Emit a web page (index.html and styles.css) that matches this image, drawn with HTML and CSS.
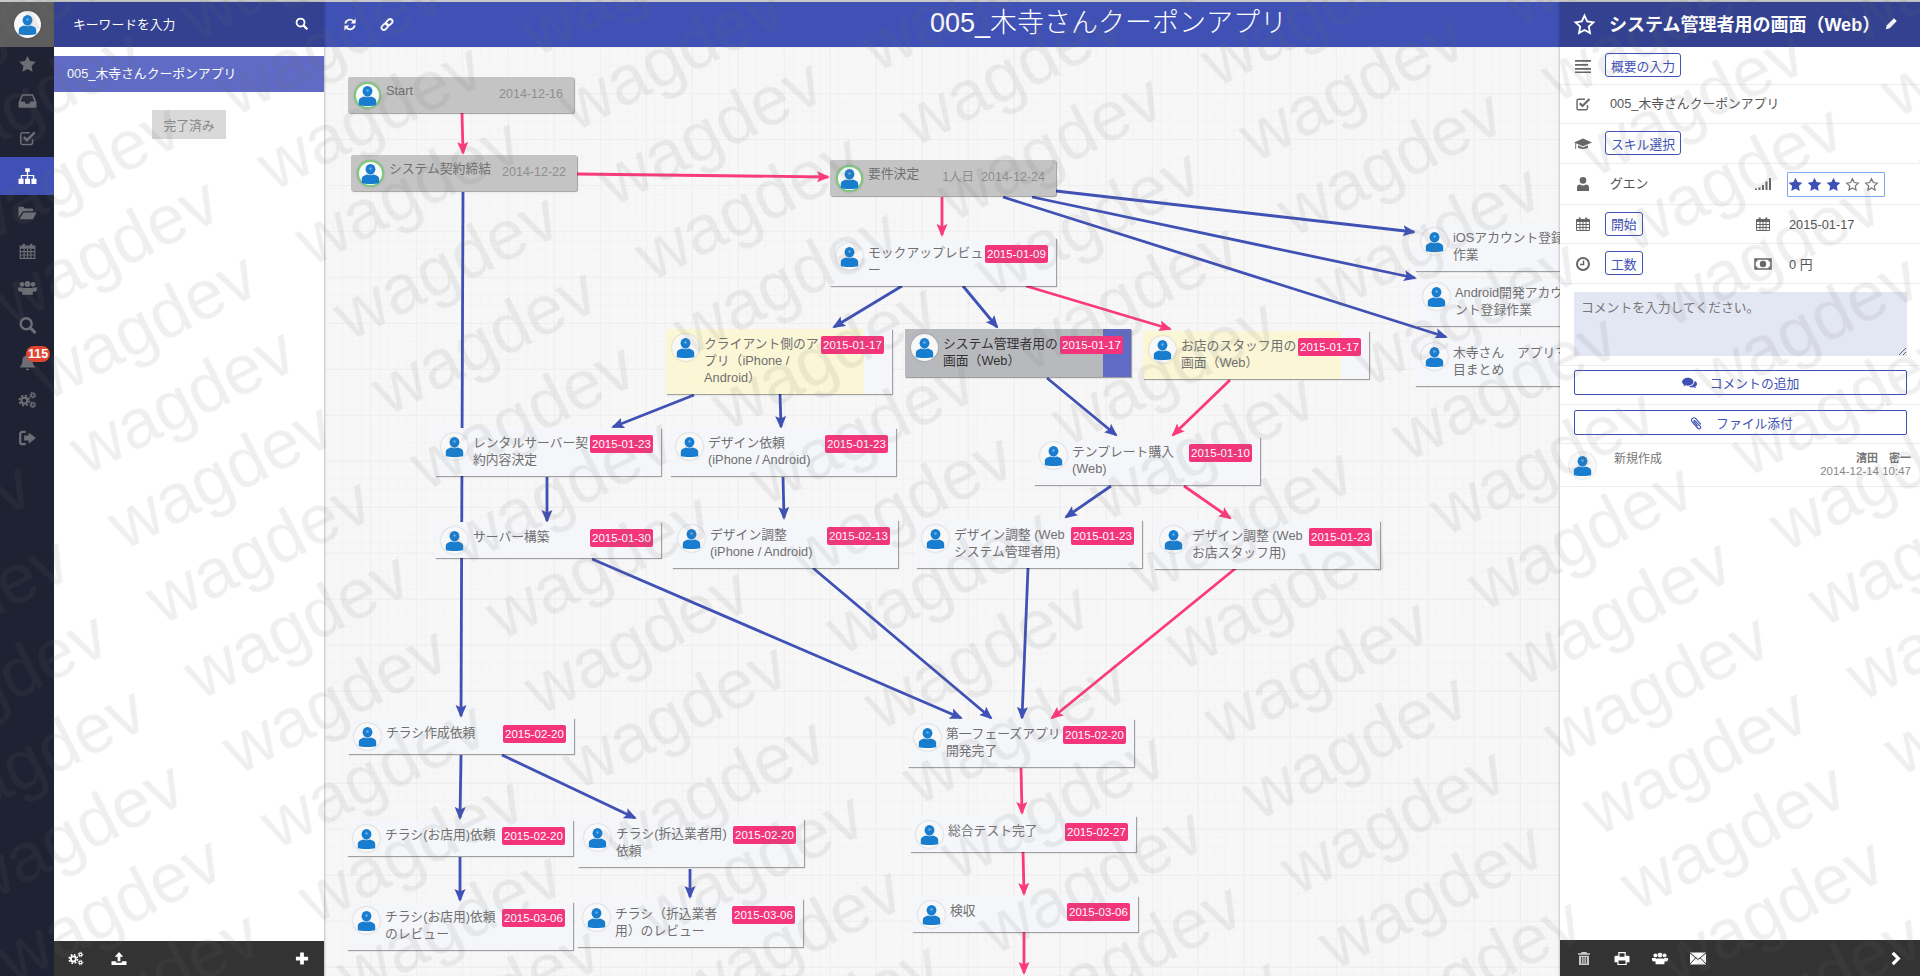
FILE: index.html
```html
<!DOCTYPE html>
<html lang="ja">
<head>
  <meta charset="UTF-8">
  <title>005_木寺さんクーポンアプリ</title>
  <link rel="stylesheet" href="styles.css">
</head>
<body>
  <!-- Icon sprite -->
  <svg class="sprite" xmlns="http://www.w3.org/2000/svg">
    <symbol id="i-star" viewBox="0 0 16 16"><polygon fill="currentColor" points="8,.8 10.2,5.4 15.3,6.1 11.6,9.7 12.5,14.8 8,12.4 3.5,14.8 4.4,9.7 .7,6.1 5.8,5.4"/></symbol>
    <symbol id="i-star-o" viewBox="0 0 16 16"><polygon fill="none" stroke="currentColor" stroke-width="1.3" points="8,1.8 9.9,5.9 14.2,6.5 11,9.5 11.8,13.9 8,11.8 4.2,13.9 5,9.5 1.8,6.5 6.1,5.9"/></symbol>
    <symbol id="i-inbox" viewBox="0 0 16 16"><path fill="currentColor" fill-rule="evenodd" d="M3 2h10l3 7v4a1 1 0 0 1-1 1H1a1 1 0 0 1-1-1V9zM3.9 3.4 2 8.4h3.4l1 2h3.2l1-2H14l-1.9-5z"/></symbol>
    <symbol id="i-check" viewBox="0 0 16 16"><path fill="none" stroke="currentColor" stroke-width="1.4" d="M12.5 9v3.2a1.5 1.5 0 0 1-1.5 1.5H3.5A1.5 1.5 0 0 1 2 12.2V4.8a1.5 1.5 0 0 1 1.500-1.500H10"/><path fill="none" stroke="currentColor" stroke-width="2.2" d="M4.800 7.200 7.500 10 14.500 3"/></symbol>
    <symbol id="i-sitemap" viewBox="0 0 16 16"><path fill="currentColor" d="M6 1h4v3.500H8.600V7H14v3.500h-1.200V8.100H8.600v2.400H7.400V8.100H3.200v2.400H2V7h5.400V4.500H6zM0 10.500h4.500V15H0zM5.800 10.500h4.400V15H5.800zM11.500 10.500H16V15h-4.500z"/></symbol>
    <symbol id="i-folder" viewBox="0 0 16 16"><path fill="currentColor" d="M0 3.500a1 1 0 0 1 1-1h3.500l1.200 1.500H12a1 1 0 0 1 1 1V6.500H4L0 12zM4.400 7.500H16l-3.300 6H.9z"/></symbol>
    <symbol id="i-calendar" viewBox="0 0 16 16"><path fill="none" stroke="currentColor" d="M1.500 3.500h13v11h-13zM1.500 8.500h13M1.500 11.500h13M5 6v8.500M8 6v8.500M11 6v8.500"/><path fill="currentColor" d="M1.500 3.500h13V6h-13zM3.700 1.500h2V4h-2zM10.300 1.500h2V4h-2z"/></symbol>
    <symbol id="i-group" viewBox="0 0 18 16"><g fill="currentColor"><circle cx="3.800" cy="4.500" r="2.200"/><circle cx="14.200" cy="4.500" r="2.200"/><circle cx="9" cy="4.200" r="2.800"/><path d="M0 7.500h4.300l1 4H1.500L0 10zM13.700 7.500H18V10l-1.500 1.500h-3.800zM5 8h8l1 3v3.500H4V11z"/></g></symbol>
    <symbol id="i-search" viewBox="0 0 16 16"><circle cx="6.800" cy="6.800" r="4.900" fill="none" stroke="currentColor" stroke-width="2.2"/><path stroke="currentColor" stroke-width="2.8" stroke-linecap="round" d="M10.800 10.800 14.300 14.300"/></symbol>
    <symbol id="i-bell" viewBox="0 0 16 16"><path fill="currentColor" d="M8 1C5 1 3.500 3 3.500 6c0 3-1.500 4.500-2.500 6h14c-1-1.500-2.500-3-2.500-6 0-3-1.500-5-4.500-5zM6.500 13h3a1.500 1.500 0 0 1-3 0z"/></symbol>
    <symbol id="i-cogs" viewBox="0 0 18 16"><g fill="none" stroke="currentColor"><circle cx="6" cy="8.500" r="2.800" stroke-width="2"/><circle cx="6" cy="8.500" r="4.700" stroke-width="1.8" stroke-dasharray="2 1.700"/><circle cx="14" cy="3.500" r="1.500" stroke-width="1.2"/><circle cx="14" cy="3.500" r="2.600" stroke-width="1.1" stroke-dasharray="1.2 .8"/><circle cx="14" cy="12.500" r="1.500" stroke-width="1.2"/><circle cx="14" cy="12.500" r="2.600" stroke-width="1.1" stroke-dasharray="1.2 .8"/></g></symbol>
    <symbol id="i-signout" viewBox="0 0 16 16"><path fill="none" stroke="currentColor" stroke-width="2" d="M6.500 2.500H3.500a2 2 0 0 0-2 2v7a2 2 0 0 0 2 2h3"/><polygon fill="currentColor" points="9,3 15.500,8 9,13 9,10.200 5,10.200 5,5.800 9,5.800"/></symbol>
    <symbol id="i-refresh" viewBox="0 0 16 16"><g fill="none" stroke="currentColor" stroke-width="2"><path d="M3 7a5 5 0 0 1 8.700-2.400"/><path d="M13 9a5 5 0 0 1-8.700 2.400"/></g><polygon fill="currentColor" points="14,1.500 14,7 8.800,7"/><polygon fill="currentColor" points="2,14.500 2,9 7.200,9"/></symbol>
    <symbol id="i-link" viewBox="0 0 16 16"><g fill="none" stroke="currentColor" stroke-width="2" transform="rotate(-45 8 8)"><rect x="0.800" y="5.500" width="7.800" height="5" rx="2.500"/><rect x="7.400" y="5.500" width="7.800" height="5" rx="2.500"/></g></symbol>
    <symbol id="i-pencil" viewBox="0 0 16 16"><path fill="currentColor" d="M11 1.500 14.500 5l-8.700 8.700-4.800 1.300 1.300-4.800z"/></symbol>
    <symbol id="i-lines" viewBox="0 0 16 16"><path fill="currentColor" d="M0 2h16v1.700H0zM0 6h13v1.700H0zM0 10h16v1.700H0zM0 13.500h16v1.500H0z"/></symbol>
    <symbol id="i-cap" viewBox="0 0 20 16"><path fill="currentColor" d="M10 2 0 6.200 10 10.500l10-4.300zM4.500 9.500v2.800c2 1.700 9 1.700 11 0V9.500L10 12zM1.400 7.200h1v6.300h-1z"/></symbol>
    <symbol id="i-user" viewBox="0 0 16 16"><circle cx="8" cy="4.400" r="3.300" fill="currentColor"/><path fill="currentColor" d="M2 15v-3.500C2 9.300 3.500 8.500 5 8.500c1 .7 2 1 3 1s2-.3 3-1c1.500 0 3 .8 3 3V15z"/></symbol>
    <symbol id="i-signal" viewBox="0 0 16 16"><path fill="currentColor" d="M0 12.500h2V14H0zM3.500 11.500h2V14h-2zM7 9h2v5H7zM10.500 5.500h2V14h-2zM14 2h2v12h-2z"/></symbol>
    <symbol id="i-clock" viewBox="0 0 16 16"><circle cx="8" cy="8" r="6" fill="none" stroke="currentColor" stroke-width="2"/><path fill="none" stroke="currentColor" stroke-width="1.5" d="M8.500 4.500V8.500H5"/></symbol>
    <symbol id="i-money" viewBox="0 0 18 14"><rect x="1" y="2" width="16" height="10" fill="none" stroke="currentColor" stroke-width="1.5"/><circle cx="9" cy="7" r="3.200" fill="currentColor"/><path fill="currentColor" d="M1.500 2.500h3l-3 3zM16.500 2.500h-3l3 3zM1.500 11.500h3l-3-3zM16.500 11.500h-3l3-3z"/></symbol>
    <symbol id="i-comments" viewBox="0 0 18 16"><path fill="currentColor" d="M6.500 2C3 2 0 4 0 6.500c0 1.400.9 2.600 2.200 3.400L1.300 12l2.700-1.300c.8.200 1.600.3 2.500.3 3.600 0 6.500-2 6.500-4.500S10.100 2 6.500 2z"/><path fill="currentColor" d="M14 6.500c0 2.900-2.800 5-6.300 5.400.9.700 2.200 1.100 3.800 1.100.6 0 1.200-.1 1.800-.2l2.400 1.300-.7-2.100c1.200-.7 2-1.800 2-3 0-1.600-1.100-2.900-2.900-3.600.2.400.9.700.9 1.100z"/></symbol>
    <symbol id="i-clip" viewBox="0 0 16 16"><path fill="none" stroke="currentColor" stroke-width="1.3" d="M13.500 9.500 8 3.200C6.800 1.900 5 1.800 3.800 2.900s-1.200 2.900 0 4.200l6.300 6.900c.8.900 2 .9 2.700.2s.7-1.800-.1-2.600L7 5.600c-.4-.4-.9-.5-1.300-.1s-.3.900.1 1.300l4.300 4.800"/></symbol>
    <symbol id="i-upload" viewBox="0 0 16 16"><path fill="currentColor" d="M8 1 12.500 6H9.500v5h-3V6H3.500zM0 11h5v1.500h6V11h5v4H0z"/></symbol>
    <symbol id="i-plus" viewBox="0 0 16 16"><path fill="currentColor" d="M6 1.500h4v4.500h4.500v4H10v4.500H6V10H1.500V6H6z"/></symbol>
    <symbol id="i-trash" viewBox="0 0 16 16"><path fill="currentColor" d="M5.500 1h5l.8 1.500h3V4H1.700V2.500h3zM2.700 5h10.600v10H2.700zM5 6.500v7h1v-7zM7.500 6.500v7h1v-7zM10 6.500v7h1v-7z" fill-rule="evenodd"/></symbol>
    <symbol id="i-print" viewBox="0 0 16 16"><path fill="currentColor" fill-rule="evenodd" d="M4 1h8v4h2.500A1.500 1.500 0 0 1 16 6.500V12h-3v3H3v-3H0V6.500A1.500 1.500 0 0 1 1.500 5H4zM5.300 2.300V6h5.400V2.300zM4.300 10v3.800h7.400V10z"/></symbol>
    <symbol id="i-mail" viewBox="0 0 16 12"><rect width="16" height="12" fill="currentColor"/><path fill="none" stroke="#333" d="M0 .5 8 7l8-6.500M0 11.500l5.800-6.200M16 11.500l-5.800-6.200"/></symbol>
    <symbol id="i-chevron" viewBox="0 0 16 16"><path fill="none" stroke="currentColor" stroke-width="3.4" d="M4.500 2 10.500 8l-6 6"/></symbol>
    <symbol id="i-person" viewBox="0 0 27 27"><ellipse cx="13.500" cy="9.300" rx="4.900" ry="5.400" fill="#187dcf"/><path fill="#187dcf" d="M4.800 23v-4.200c0-2.700 3-3.300 5.200-4.300 2 1.100 5 1.100 7 0 2.200 1 5.200 1.600 5.200 4.300V23c-3 1.300-14.400 1.300-17.400 0z"/><circle cx="13.500" cy="8.500" r="1.200" fill="#6db2ea"/></symbol>
  </svg>

  <div class="app">
    <!-- Icon rail -->
    <nav class="rail">
      <div class="rail-top"><span class="avatar"><svg><use href="#i-person"/></svg></span></div>
      <a class="rail-item"><svg class="ico"><use href="#i-star"/></svg></a>
      <a class="rail-item"><svg class="ico"><use href="#i-inbox"/></svg></a>
      <a class="rail-item"><svg class="ico"><use href="#i-check"/></svg></a>
      <a class="rail-item active"><svg class="ico"><use href="#i-sitemap"/></svg></a>
      <a class="rail-item"><svg class="ico"><use href="#i-folder"/></svg></a>
      <a class="rail-item"><svg class="ico"><use href="#i-calendar"/></svg></a>
      <a class="rail-item"><svg class="ico"><use href="#i-group"/></svg></a>
      <a class="rail-item"><svg class="ico"><use href="#i-search"/></svg></a>
      <a class="rail-item"><svg class="ico"><use href="#i-bell"/></svg><span class="count">115</span></a>
      <a class="rail-item"><svg class="ico"><use href="#i-cogs"/></svg></a>
      <a class="rail-item"><svg class="ico"><use href="#i-signout"/></svg></a>
    </nav>

    <!-- Project list -->
    <aside class="projects">
      <div class="projects-head">
        <span>キーワードを入力</span>
        <svg class="ico-sm"><use href="#i-search"/></svg>
      </div>
      <div class="project-item">005_木寺さんクーポンアプリ</div>
      <button class="done-btn">完了済み</button>
      <div class="bar-foot">
        <svg class="ico-sm"><use href="#i-cogs"/></svg>
        <svg class="ico-sm upload"><use href="#i-upload"/></svg>
        <svg class="ico-sm add"><use href="#i-plus"/></svg>
      </div>
    </aside>

    <!-- Diagram -->
    <main class="board">
      <header class="board-head">
        <svg class="ico-sm"><use href="#i-refresh"/></svg>
        <svg class="ico-sm"><use href="#i-link"/></svg>
        <h1>005_木寺さんクーポンアプリ</h1>
      </header>
      <div class="canvas">
        <svg class="edges" viewBox="324 47 1236 929">
          <defs>
            <marker id="head-blue" markerUnits="userSpaceOnUse" markerWidth="14" markerHeight="12" refX="11" refY="6" orient="auto"><path d="M0 .5 13 6 0 11.500 2.500 6z" fill="#3f51b5"/></marker>
            <marker id="head-pink" markerUnits="userSpaceOnUse" markerWidth="14" markerHeight="12" refX="11" refY="6" orient="auto"><path d="M0 .5 13 6 0 11.500 2.500 6z" fill="#fb3a7c"/></marker>
          </defs>
          <g class="edge-pink">
            <line x1="462" y1="113" x2="463" y2="153"/>
            <line x1="577" y1="174" x2="828" y2="177"/>
            <line x1="942" y1="197" x2="942" y2="235"/>
            <line x1="1026" y1="286" x2="1170" y2="329"/>
            <line x1="1230" y1="380" x2="1173" y2="435"/>
            <line x1="1184" y1="486" x2="1230" y2="518"/>
            <line x1="1236" y1="568" x2="1052" y2="718"/>
            <line x1="1021" y1="768" x2="1022" y2="813"/>
            <line x1="1023" y1="851" x2="1024" y2="894"/>
            <line x1="1024" y1="932" x2="1024" y2="973"/>
          </g>
          <g class="edge-blue">
            <line x1="463" y1="192" x2="461" y2="716"/>
            <line x1="1056" y1="191" x2="1414" y2="232"/>
            <line x1="1032" y1="197" x2="1415" y2="278"/>
            <line x1="1003" y1="197" x2="1446" y2="337"/>
            <line x1="902" y1="286" x2="834" y2="327"/>
            <line x1="963" y1="286" x2="997" y2="327"/>
            <line x1="1047" y1="378" x2="1116" y2="435"/>
            <line x1="694" y1="395" x2="613" y2="427"/>
            <line x1="780" y1="394" x2="781" y2="427"/>
            <line x1="547" y1="477" x2="547" y2="521"/>
            <line x1="783" y1="477" x2="784" y2="518"/>
            <line x1="1111" y1="486" x2="1066" y2="517"/>
            <line x1="592" y1="559" x2="961" y2="718"/>
            <line x1="813" y1="568" x2="991" y2="718"/>
            <line x1="1028" y1="568" x2="1022" y2="718"/>
            <line x1="461" y1="755" x2="460" y2="818"/>
            <line x1="502" y1="755" x2="635" y2="818"/>
            <line x1="460" y1="857" x2="460" y2="900"/>
            <line x1="690" y1="869" x2="690" y2="897"/>
          </g>
        </svg>

        <div class="node done" style="left:24px;top:30px">
          <span class="avatar"><svg><use href="#i-person"/></svg></span>
          <div class="node-title">Start</div>
          <span class="node-date">2014-12-16</span>
        </div>
        <div class="node done" style="left:27px;top:108px">
          <span class="avatar"><svg><use href="#i-person"/></svg></span>
          <div class="node-title">システム契約締結</div>
          <span class="node-date">2014-12-22</span>
        </div>
        <div class="node done" style="left:506px;top:113px">
          <span class="avatar"><svg><use href="#i-person"/></svg></span>
          <div class="node-title">要件決定</div>
          <span class="node-date">1人日&nbsp;&nbsp;2014-12-24</span>
        </div>
        <div class="node" style="left:506px;top:191px">
          <span class="avatar"><svg><use href="#i-person"/></svg></span>
          <div class="node-title">モックアップレビュ<br>ー</div>
          <span class="badge">2015-01-09</span>
        </div>
        <div class="node warn" style="left:342px;top:282px">
          <span class="avatar"><svg><use href="#i-person"/></svg></span>
          <div class="node-title">クライアント側のア<br>プリ（iPhone /<br>Android）</div>
          <span class="badge">2015-01-17</span>
        </div>
        <div class="node selected" style="left:581px;top:282px">
          <span class="avatar"><svg><use href="#i-person"/></svg></span>
          <div class="node-title">システム管理者用の<br>画面（Web）</div>
          <span class="badge">2015-01-17</span>
        </div>
        <div class="node warn" style="left:819px;top:284px">
          <span class="avatar"><svg><use href="#i-person"/></svg></span>
          <div class="node-title">お店のスタッフ用の<br>画面（Web）</div>
          <span class="badge">2015-01-17</span>
        </div>
        <div class="node" style="left:710px;top:390px">
          <span class="avatar"><svg><use href="#i-person"/></svg></span>
          <div class="node-title">テンプレート購入<br>(Web)</div>
          <span class="badge">2015-01-10</span>
        </div>
        <div class="node" style="left:111px;top:381px">
          <span class="avatar"><svg><use href="#i-person"/></svg></span>
          <div class="node-title">レンタルサーバー契<br>約内容決定</div>
          <span class="badge">2015-01-23</span>
        </div>
        <div class="node" style="left:346px;top:381px">
          <span class="avatar"><svg><use href="#i-person"/></svg></span>
          <div class="node-title">デザイン依頼<br>(iPhone / Android)</div>
          <span class="badge">2015-01-23</span>
        </div>
        <div class="node" style="left:111px;top:475px">
          <span class="avatar"><svg><use href="#i-person"/></svg></span>
          <div class="node-title">サーバー構築</div>
          <span class="badge">2015-01-30</span>
        </div>
        <div class="node" style="left:348px;top:473px">
          <span class="avatar"><svg><use href="#i-person"/></svg></span>
          <div class="node-title">デザイン調整<br>(iPhone / Android)</div>
          <span class="badge">2015-02-13</span>
        </div>
        <div class="node" style="left:592px;top:473px">
          <span class="avatar"><svg><use href="#i-person"/></svg></span>
          <div class="node-title">デザイン調整 (Web<br>システム管理者用)</div>
          <span class="badge">2015-01-23</span>
        </div>
        <div class="node" style="left:830px;top:474px">
          <span class="avatar"><svg><use href="#i-person"/></svg></span>
          <div class="node-title">デザイン調整 (Web<br>お店スタッフ用)</div>
          <span class="badge">2015-01-23</span>
        </div>
        <div class="node" style="left:1091px;top:176px">
          <span class="avatar"><svg><use href="#i-person"/></svg></span>
          <div class="node-title">iOSアカウント登録<br>作業</div>
        </div>
        <div class="node" style="left:1093px;top:231px">
          <span class="avatar"><svg><use href="#i-person"/></svg></span>
          <div class="node-title">Android開発アカウ<br>ント登録作業</div>
        </div>
        <div class="node" style="left:1091px;top:291px">
          <span class="avatar"><svg><use href="#i-person"/></svg></span>
          <div class="node-title">木寺さん　アプリマ<br>目まとめ</div>
        </div>
        <div class="node" style="left:24px;top:671px">
          <span class="avatar"><svg><use href="#i-person"/></svg></span>
          <div class="node-title">チラシ作成依頼</div>
          <span class="badge">2015-02-20</span>
        </div>
        <div class="node" style="left:23px;top:773px">
          <span class="avatar"><svg><use href="#i-person"/></svg></span>
          <div class="node-title">チラシ(お店用)依頼</div>
          <span class="badge">2015-02-20</span>
        </div>
        <div class="node" style="left:254px;top:772px">
          <span class="avatar"><svg><use href="#i-person"/></svg></span>
          <div class="node-title">チラシ(折込業者用)<br>依頼</div>
          <span class="badge">2015-02-20</span>
        </div>
        <div class="node" style="left:23px;top:855px">
          <span class="avatar"><svg><use href="#i-person"/></svg></span>
          <div class="node-title">チラシ(お店用)依頼<br>のレビュー</div>
          <span class="badge">2015-03-06</span>
        </div>
        <div class="node" style="left:253px;top:852px">
          <span class="avatar"><svg><use href="#i-person"/></svg></span>
          <div class="node-title">チラシ（折込業者<br>用）のレビュー</div>
          <span class="badge">2015-03-06</span>
        </div>
        <div class="node" style="left:584px;top:672px">
          <span class="avatar"><svg><use href="#i-person"/></svg></span>
          <div class="node-title">第一フェーズアプリ<br>開発完了</div>
          <span class="badge">2015-02-20</span>
        </div>
        <div class="node" style="left:586px;top:769px">
          <span class="avatar"><svg><use href="#i-person"/></svg></span>
          <div class="node-title">総合テスト完了</div>
          <span class="badge">2015-02-27</span>
        </div>
        <div class="node" style="left:588px;top:849px">
          <span class="avatar"><svg><use href="#i-person"/></svg></span>
          <div class="node-title">検収</div>
          <span class="badge">2015-03-06</span>
        </div>
      </div>
    </main>

    <!-- Task detail -->
    <aside class="detail">
      <header class="detail-head">
        <svg class="head-star"><use href="#i-star-o"/></svg>
        <h2>システム管理者用の画面（Web）</h2>
        <svg class="ico-xs"><use href="#i-pencil"/></svg>
      </header>
      <div class="row row-38">
        <div class="cell"><svg class="ico-row"><use href="#i-lines"/></svg><button class="chip">概要の入力</button></div>
      </div>
      <div class="row row-39">
        <div class="cell wide"><svg class="ico-row"><use href="#i-check"/></svg><span class="val">005_木寺さんクーポンアプリ</span></div>
      </div>
      <div class="row row-40">
        <div class="cell"><svg class="ico-row"><use href="#i-cap"/></svg><button class="chip">スキル選択</button></div>
      </div>
      <div class="row row-41">
        <div class="cell"><svg class="ico-row"><use href="#i-user"/></svg><span class="val">グエン</span></div>
        <div class="cell"><svg class="ico-row"><use href="#i-signal"/></svg>
          <div class="stars">
            <svg class="on"><use href="#i-star"/></svg>
            <svg class="on"><use href="#i-star"/></svg>
            <svg class="on"><use href="#i-star"/></svg>
            <svg><use href="#i-star-o"/></svg>
            <svg><use href="#i-star-o"/></svg>
          </div>
        </div>
      </div>
      <div class="row row-39">
        <div class="cell"><svg class="ico-row"><use href="#i-calendar"/></svg><button class="chip">開始</button></div>
        <div class="cell"><svg class="ico-row"><use href="#i-calendar"/></svg><span class="val near">2015-01-17</span></div>
      </div>
      <div class="row row-40">
        <div class="cell"><svg class="ico-row"><use href="#i-clock"/></svg><button class="chip">工数</button></div>
        <div class="cell"><svg class="ico-row"><use href="#i-money"/></svg><span class="val near">0 円</span></div>
      </div>
      <div class="comment-box">
        <textarea placeholder="コメントを入力してください。"></textarea>
      </div>
      <div class="action first">
        <button class="wide-btn"><svg class="ico-btn"><use href="#i-comments"/></svg>コメントの追加</button>
      </div>
      <div class="action">
        <button class="wide-btn"><svg class="ico-btn"><use href="#i-clip"/></svg>ファイル添付</button>
      </div>
      <div class="history">
        <span class="avatar"><svg><use href="#i-person"/></svg></span>
        <span class="history-text">新規作成</span>
        <div class="history-meta">
          <strong>濱田　密一</strong>
          <span>2014-12-14 10:47</span>
        </div>
      </div>
      <div class="bar-foot detail-foot">
        <svg class="ico-sm soft"><use href="#i-trash"/></svg>
        <svg class="ico-sm"><use href="#i-print"/></svg>
        <svg class="ico-sm"><use href="#i-group"/></svg>
        <svg class="ico-sm"><use href="#i-mail"/></svg>
        <svg class="ico-sm add"><use href="#i-chevron"/></svg>
      </div>
    </aside>
  </div>

  <!-- Watermark over the whole page -->
  <svg class="watermark" width="1920" height="976">
    <defs>
      <pattern id="wm" patternUnits="userSpaceOnUse" width="296" height="84" patternTransform="translate(585 152) rotate(-27)">
        <text x="0" y="62">wagdev</text>
      </pattern>
    </defs>
    <rect width="1920" height="976" fill="url(#wm)"/>
  </svg>
</body>
</html>
```

FILE: styles.css
```css
/* Base */
html, body {
  margin: 0;
  padding: 0;
  height: 976px;
  overflow: hidden;
}
body {
  font-family: "Liberation Sans", "Noto Sans CJK JP", sans-serif;
  font-size: 12.8px;
  color: #666;
  background: #fff;
}
h1, h2 {
  margin: 0;
  font-weight: normal;
}
button {
  font-family: inherit;
}
.sprite {
  display: none;
}

.app {
  display: flex;
  height: 976px;
  box-sizing: border-box;
  border-top: 2px solid #c9c9c9;
}

/* Rail */
.rail {
  width: 54px;
  flex: none;
  background: #1f2233;
  color: #6d6e75;
}
.rail-top {
  height: 45px;
  margin-bottom: -2px;
  background: #5d5d5d;
  display: flex;
  align-items: center;
  justify-content: center;
}
.rail-item {
  height: 37.4px;
  display: flex;
  align-items: center;
  justify-content: center;
  position: relative;
}
.rail-item.active {
  background: #3f51b5;
  color: #fff;
}
.ico {
  width: 19px;
  height: 18px;
}
.count {
  position: absolute;
  left: 26px;
  top: 2px;
  height: 16px;
  line-height: 16px;
  padding: 0 2px;
  border-radius: 8px;
  background: #df4632;
  color: #fff;
  font-size: 12.5px;
  font-weight: bold;
}

/* Avatars */
.avatar {
  display: block;
  flex: none;
  width: 27px;
  height: 27px;
  border-radius: 50%;
  background: #f8f8f8;
  box-shadow: 0 0 2px rgba(0, 0, 0, 0.25);
}
.avatar svg {
  display: block;
  width: 27px;
  height: 27px;
}

/* Project list */
.projects {
  width: 270px;
  flex: none;
  display: flex;
  flex-direction: column;
  background: #fff;
  box-shadow: 1px 0 2px rgba(0, 0, 0, 0.2);
  z-index: 2;
}
.projects-head {
  height: 45px;
  flex: none;
  display: flex;
  align-items: center;
  justify-content: space-between;
  padding: 0 16px 2px 19px;
  box-sizing: border-box;
  background: #334190;
  color: #fff;
}
.ico-sm {
  width: 16px;
  height: 15px;
  color: #fff;
}
.projects-head .ico-sm {
  width: 13px;
  height: 13px;
}
.project-item {
  margin-top: 9px;
  height: 36px;
  line-height: 36px;
  padding-left: 13px;
  background: #5f6bc4;
  color: #fff;
}
.done-btn {
  align-self: center;
  width: 74px;
  height: 29px;
  margin-top: 18px;
  border: 0;
  background: #d9d9d9;
  color: #888;
  font-size: 12.8px;
}
.bar-foot {
  margin-top: auto;
  height: 35px;
  flex: none;
  display: flex;
  align-items: center;
  padding: 0 14px;
  gap: 27px;
  background: #333;
}
.bar-foot .add {
  margin-left: auto;
}

/* Board */
.board {
  flex: 1;
  min-width: 0;
  display: flex;
  flex-direction: column;
}
.board-head {
  height: 45px;
  flex: none;
  display: flex;
  align-items: center;
  gap: 21px;
  padding-left: 18px;
  background: #3f51b5;
  color: #fff;
}
.board-head h1 {
  margin: -8px 0 0 514px;
  font-size: 27px;
  font-weight: 300;
  white-space: nowrap;
}
.canvas {
  flex: 1;
  position: relative;
  overflow: hidden;
  background-color: #f7f7f7;
  background-image:
    linear-gradient(#efefef 1px, transparent 1px),
    linear-gradient(90deg, #efefef 1px, transparent 1px),
    linear-gradient(#f3f3f3 1px, transparent 1px),
    linear-gradient(90deg, #f3f3f3 1px, transparent 1px);
  background-size: 46px 46px, 46px 46px, 9.2px 9.2px, 9.2px 9.2px;
}
.edges {
  position: absolute;
  left: 0;
  top: 0;
  width: 1236px;
  height: 929px;
}
.edges line {
  stroke-width: 2.8;
}
.edge-pink line {
  stroke: #fb3a7c;
  marker-end: url(#head-pink);
}
.edge-blue line {
  stroke: #3f51b5;
  marker-end: url(#head-blue);
}

/* Nodes */
.node {
  position: absolute;
  box-sizing: border-box;
  width: 226px;
  min-height: 36px;
  display: flex;
  gap: 5px;
  padding: 5px 6px 4px;
  background: #f5f6fa;
  box-shadow: 1px 1px 1px rgba(0, 0, 0, 0.35);
}
.node-title {
  margin: 1px 0 4px;
  line-height: 17px;
  white-space: nowrap;
  color: #707070;
}
.badge {
  position: absolute;
  right: 8px;
  top: 7px;
  width: 63px;
  height: 18px;
  line-height: 18px;
  text-align: center;
  border-radius: 2px;
  background: #f5357b;
  color: #fff;
  font-size: 11.5px;
}
.node-date {
  position: absolute;
  right: 11px;
  top: 9px;
  line-height: 17px;
  color: #8e8e8e;
  font-size: 12.5px;
}
.node.done {
  background: #c4c4c4;
  border-radius: 2px;
}
.node.done .node-title {
  margin-top: 0;
}
.node.done .avatar {
  box-sizing: border-box;
  border: 2px solid #7ccb7c;
  background: #fafafa;
}
.node.done .avatar svg {
  margin: -2px;
}
.node.warn {
  background: linear-gradient(90deg, #fbf6d5 198px, #f5f6fa 198px);
}
.node.selected {
  background: linear-gradient(90deg, #b8b9bd 198px, #5f6bc4 198px);
}
.node.selected .node-title {
  color: #333;
}

/* Detail panel */
.detail {
  width: 360px;
  flex: none;
  display: flex;
  flex-direction: column;
  background: #fff;
  box-shadow: -1px 0 2px rgba(0, 0, 0, 0.2);
  z-index: 2;
}
.detail-head {
  height: 45px;
  flex: none;
  display: flex;
  align-items: center;
  padding-left: 13px;
  background: #334190;
  color: #fff;
}
.head-star {
  width: 23px;
  height: 23px;
}
.detail-head h2 {
  margin: -3px 0 0 13px;
  font-size: 18px;
  font-weight: bold;
  white-space: nowrap;
}
.ico-xs {
  width: 13px;
  height: 13px;
  margin: -3px 0 0 5px;
}
.row {
  box-sizing: border-box;
  display: grid;
  grid-template-columns: 180px 1fr;
  padding-left: 14px;
  border-bottom: 1px solid #ececec;
}
.row-38 { height: 38px; }
.row-39 { height: 39px; }
.row-40 { height: 40px; }
.row-41 { height: 41px; }
.cell {
  display: flex;
  align-items: center;
}
.cell.wide {
  grid-column: 1 / 3;
}
.ico-row {
  width: 18px;
  height: 16px;
  flex: none;
  margin-right: 13px;
  color: #666;
}
.chip {
  height: 24px;
  margin-top: -1px;
  padding: 0 5px;
  border: 1px solid #3f51b5;
  border-radius: 3px;
  background: transparent;
  color: #3f51b5;
  font-size: 12.8px;
}
.val {
  margin: -3px 0 0 5px;
  color: #555;
  white-space: nowrap;
}
.val.near {
  margin: 0 0 0 4px;
}
.stars {
  display: flex;
  gap: 4px;
  margin-left: 2px;
  width: 98px;
  height: 25px;
  box-sizing: border-box;
  align-items: center;
  border: 1px solid #79a7ee;
  border-radius: 1px;
  color: #777;
}
.stars svg {
  width: 15px;
  height: 15px;
}
.stars .on {
  color: #3f51b5;
}
.comment-box {
  padding: 8px 13px 9px 14px;
  border-bottom: 1px solid #ececec;
}
.comment-box textarea {
  display: block;
  box-sizing: border-box;
  width: 333px;
  height: 64px;
  padding: 5px 7px;
  border: 0;
  outline: 0;
  background: #e3e6f3;
  font-family: inherit;
  font-size: 12.8px;
  color: #666;
}
.comment-box textarea::placeholder {
  color: #777;
}
.action {
  padding: 5px 13px 8px 14px;
  border-bottom: 1px solid #ececec;
}
.action.first {
  padding: 4px 13px 9px 14px;
}
.wide-btn {
  display: flex;
  align-items: center;
  justify-content: center;
  gap: 12px;
  width: 333px;
  height: 25px;
  box-sizing: border-box;
  border: 1px solid #3f51b5;
  border-radius: 2px;
  background: transparent;
  color: #3f51b5;
  font-size: 12.8px;
}
.ico-btn {
  width: 16px;
  height: 14px;
}
.history {
  height: 43px;
  box-sizing: border-box;
  display: flex;
  align-items: flex-start;
  padding: 8px 9px 0 9px;
  border-bottom: 1px solid #ececec;
}
.history-text {
  margin-left: 18px;
  line-height: 14px;
  font-size: 12px;
  color: #777;
}
.history-meta {
  margin-left: auto;
  display: flex;
  flex-direction: column;
  align-items: flex-end;
  line-height: 13px;
  font-size: 11.5px;
  color: #888;
}
.history-meta strong {
  color: #777;
  font-size: 11px;
}
.detail-foot {
  height: 36px;
  padding: 0 16px;
  gap: 22px;
}
.detail-foot .soft {
  color: #ccc;
}

/* Watermark */
.watermark {
  position: absolute;
  left: 0;
  top: 0;
  pointer-events: none;
  z-index: 10;
}
.watermark text {
  font-family: "Liberation Sans", sans-serif;
  font-size: 70px;
  fill: rgba(110, 110, 110, 0.11);
}
```
